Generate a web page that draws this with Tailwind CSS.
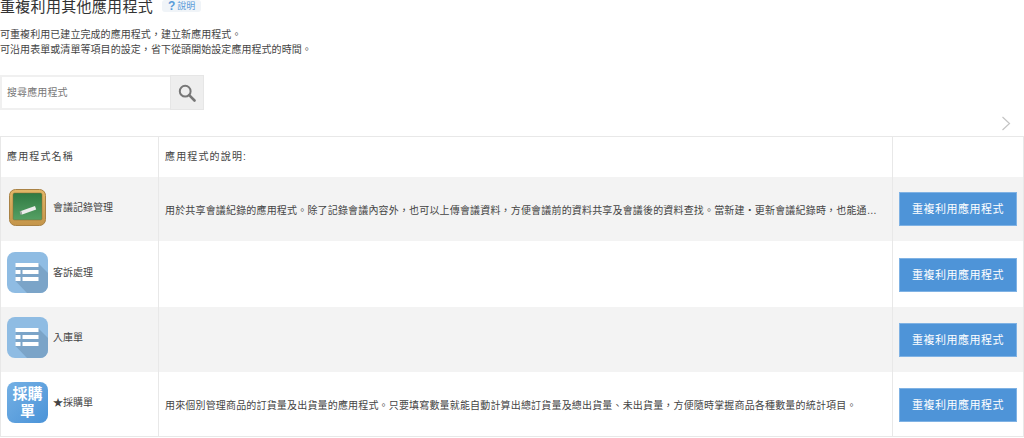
<!DOCTYPE html>
<html lang="zh-Hant">
<head>
<meta charset="utf-8">
<script src="https://cdn.jsdelivr.net/npm/@tailwindcss/browser@4"></script>
</head>
<body class="bg-white overflow-hidden h-[438px] text-[#444] font-['Liberation_Sans','Noto_Sans_CJK_TC',sans-serif] text-[10px]">
<div class="flex items-start h-[13px] gap-[9px]">
  <h1 class="text-[15px] leading-[13px] tracking-[0.3px] font-normal text-[#333] whitespace-nowrap">重複利用其他應用程式</h1>
  <span class="flex items-center gap-[2px] h-[12px] w-[39px] pl-[6px] bg-[#f0f4f8] rounded-[3px] text-[#5a9bd8] text-[9px] leading-[12px]"><b class="text-[12px] font-bold leading-[12px]">?</b>說明</span>
</div>
<p class="mt-[14px] leading-[15px] tracking-[0.06px] whitespace-nowrap">可重複利用已建立完成的應用程式，建立新應用程式。<br>可沿用表單或清單等項目的設定，省下從頭開始設定應用程式的時間。</p>
<div class="mt-[18px] flex w-[204px] h-[35px]">
  <div class="w-[170px] border-2 border-[#f0f0f0] border-r-0 pl-[5px] flex items-center text-[#777] tracking-[0.1px]">搜尋應用程式</div>
  <div class="w-[34px] bg-[#eeeeee] border border-[#e6e6e6] flex items-center justify-center">
    <svg width="18" height="18" viewBox="0 0 18 18" fill="none" stroke="#777"><circle cx="7.2" cy="7.2" r="5.4" stroke-width="2"/><path d="M11.2 11.2 16.5 16.5" stroke-width="2.6" stroke-linecap="round"/></svg>
  </div>
</div>
<div class="h-[26px] flex justify-end items-center pr-[13px]">
  <svg width="10" height="15" viewBox="0 0 10 15" fill="none" stroke="#c4c4c4" stroke-width="1.2"><path d="M1.5 1 8.5 7.5 1.5 14"/></svg>
</div>
<div class="grid grid-cols-[158px_734px_1fr] grid-rows-[40px_64px_66px_65px_64px] border border-[#e8e8e8]">

  <div class="flex items-center pl-[6px] tracking-[1.15px] border-r border-[#e8e8e8]"><span class="-mt-[2px]">應用程式名稱</span></div>
  <div class="flex items-center pl-[6px] tracking-[1.15px] border-r border-[#e8e8e8]"><span class="-mt-[2px]">應用程式的說明:</span></div>
  <div></div>

  <div class="bg-[#f3f3f3] flex items-center pl-[8px] gap-[7px] border-r border-[#e8e8e8]">
    <svg width="37" height="37" viewBox="0 0 37 37" class="shrink-0 -mt-[4px]">
      <defs>
        <linearGradient id="frame" x1="0" y1="0" x2="0" y2="1"><stop offset="0" stop-color="#e2b868"/><stop offset="1" stop-color="#c4954a"/></linearGradient>
        <linearGradient id="board" x1="0" y1="0" x2="0" y2="1"><stop offset="0" stop-color="#2f7a42"/><stop offset="1" stop-color="#55a064"/></linearGradient>
      </defs>
      <rect x="0.5" y="0.5" width="36" height="36" rx="6" fill="url(#frame)" stroke="#a98245" stroke-width="1"/>
      <rect x="4" y="4" width="29" height="27" rx="1.5" fill="url(#board)" stroke="#8a6a30" stroke-width="0.5"/>
      <path d="M12 22 26 17 27.2 20.4 13.2 25.4Z" fill="#ececec"/>
      <path d="M12 22 13.2 25.4 11.6 25.8 10.6 22.6Z" fill="#a8a8a8"/>
    </svg>
    <span class="-mt-[3px]">會議記錄管理</span>
  </div>
  <div class="bg-[#f3f3f3] flex items-center pl-[6px] pr-[11px] border-r border-[#e8e8e8] min-w-0">
    <p class="truncate mt-[2px] tracking-[0.17px]">用於共享會議紀錄的應用程式。除了記錄會議內容外，也可以上傳會議資料，方便會議前的資料共享及會議後的資料查找。當新建・更新會議紀錄時，也能通知相關人員，讓大家隨時掌握最新的會議內容與資訊。</p>
  </div>
  <div class="bg-[#f3f3f3] flex items-center justify-center">
    <button class="w-[118px] h-[34px] bg-[#4e94d8] border border-[#7fb2e4] text-white text-[11px] tracking-[0.5px]">重複利用應用程式</button>
  </div>

  <div class="flex items-center pl-[6px] gap-[5px] border-r border-[#e8e8e8]">
    <svg width="41" height="41" viewBox="0 0 41 41" class="shrink-0 -mt-[4px]">
      <rect width="41" height="41" rx="8" fill="#8fbce3"/>
      <path d="M8.5 29 9 11H31L41 21V33A8 8 0 0 1 33 41H20Z" fill="#7ba4c8"/>
      <g fill="#fff"><rect x="8.5" y="11" width="23" height="4"/><rect x="8.5" y="18" width="5" height="4"/><rect x="15.5" y="18" width="16" height="4"/><rect x="8.5" y="25" width="5" height="4"/><rect x="15.5" y="25" width="16" height="4"/></g>
    </svg>
    <span class="-mt-[4px]">客訴處理</span>
  </div>
  <div class="border-r border-[#e8e8e8]"></div>
  <div class="flex items-center justify-center pt-[2px]">
    <button class="w-[118px] h-[34px] bg-[#4e94d8] border border-[#7fb2e4] text-white text-[11px] tracking-[0.5px]">重複利用應用程式</button>
  </div>

  <div class="bg-[#f3f3f3] flex items-center pl-[6px] gap-[5px] border-r border-[#e8e8e8]">
    <svg width="41" height="41" viewBox="0 0 41 41" class="shrink-0 -mt-[4px]">
      <rect width="41" height="41" rx="8" fill="#8fbce3"/>
      <path d="M8.5 29 9 11H31L41 21V33A8 8 0 0 1 33 41H20Z" fill="#7ba4c8"/>
      <g fill="#fff"><rect x="8.5" y="11" width="23" height="4"/><rect x="8.5" y="18" width="5" height="4"/><rect x="15.5" y="18" width="16" height="4"/><rect x="8.5" y="25" width="5" height="4"/><rect x="15.5" y="25" width="16" height="4"/></g>
    </svg>
    <span class="-mt-[4px]">入庫單</span>
  </div>
  <div class="bg-[#f3f3f3] border-r border-[#e8e8e8]"></div>
  <div class="bg-[#f3f3f3] flex items-center justify-center pt-[1px]">
    <button class="w-[118px] h-[34px] bg-[#4e94d8] border border-[#7fb2e4] text-white text-[11px] tracking-[0.5px]">重複利用應用程式</button>
  </div>

  <div class="flex items-center pl-[6px] gap-[5px] border-r border-[#e8e8e8]">
    <div class="w-[41px] h-[41px] shrink-0 -mt-[4px] rounded-[8px] bg-gradient-to-br from-[#74b0e4] to-[#4a93d8] flex items-center justify-center text-center text-white font-bold text-[15px] leading-[17px]">採購<br>單</div>
    <span class="-mt-[4px]">★採購單</span>
  </div>
  <div class="flex items-center pl-[6px] pr-[11px] border-r border-[#e8e8e8] min-w-0">
    <p class="truncate mt-[2px] tracking-[0.17px]">用來個別管理商品的訂貨量及出貨量的應用程式。只要填寫數量就能自動計算出總訂貨量及總出貨量、未出貨量，方便隨時掌握商品各種數量的統計項目。</p>
  </div>
  <div class="flex items-center justify-center pt-[2px]">
    <button class="w-[118px] h-[34px] bg-[#4e94d8] border border-[#7fb2e4] text-white text-[11px] tracking-[0.5px]">重複利用應用程式</button>
  </div>
</div>
</body>
</html>
